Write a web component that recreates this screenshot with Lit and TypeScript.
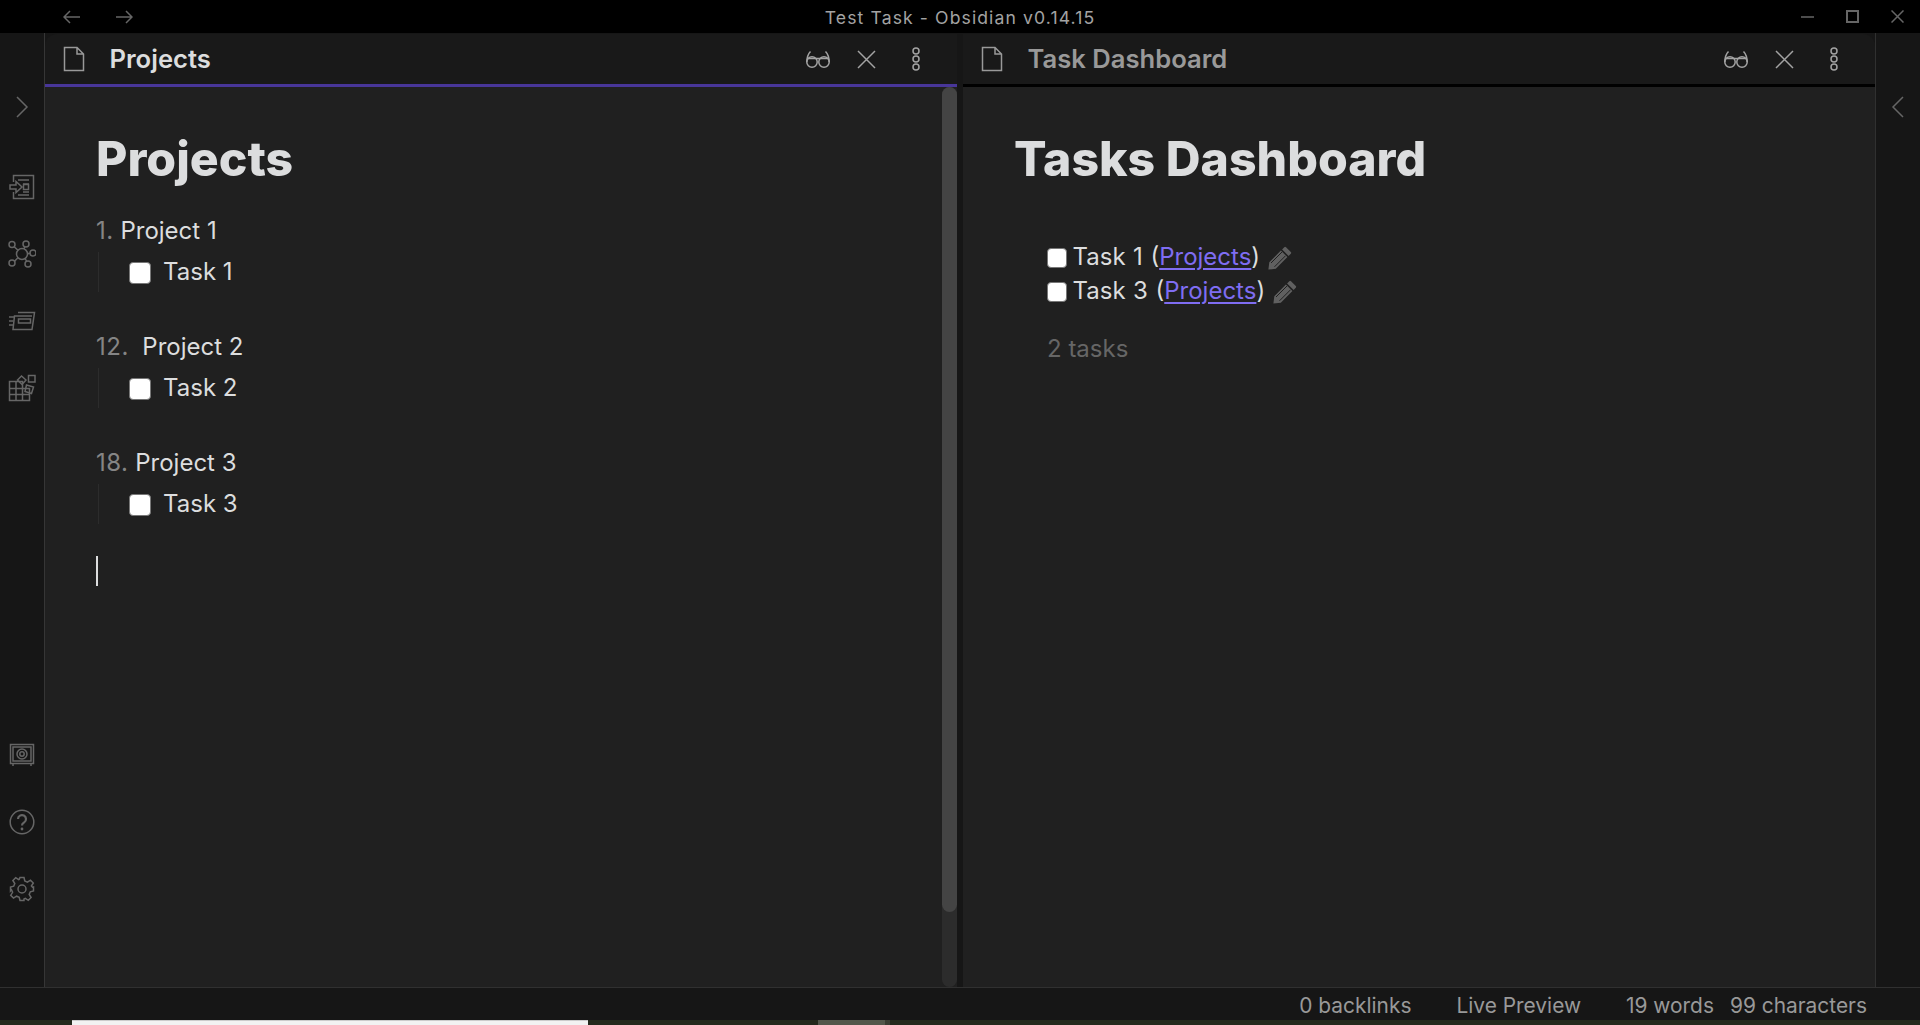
import { LitElement, html, css, svg } from "lit";
import { customElement } from "lit/decorators.js";

const ic = (w: number, h: number, body: unknown, cls = "") =>
  html`<svg class="ic ${cls}" width=${w} height=${h} viewBox="0 0 ${w} ${h}">${body}</svg>`;

const fileIcon = ic(22, 26, svg`<path d="M1.5 1.5H14L20.5 8V24.5H1.5Z M14 1.5V8H20.5"/>`);
const glasses = ic(26, 18, svg`<circle cx="7" cy="12" r="5.2"/><circle cx="19" cy="12" r="5.2"/><path d="M1.8 12 Q2 5 5.5 1.5 M24.2 12 Q24 5 20.5 1.5 M1.8 8.5H24.2"/>`);
const closeX = ic(19, 19, svg`<path d="M1 1L18 18M18 1L1 18"/>`);
const dots = ic(8, 24, svg`<circle cx="4" cy="4" r="3"/><circle cx="4" cy="12" r="3"/><circle cx="4" cy="20" r="3"/>`, "dots");
const pencil = html`<svg class="pencil" width="24" height="24" viewBox="0 0 24 24"><path d="M18 1.2L22.8 6a1.2 1.2 0 0 1 0 1.7L20.6 9.9 14.1 3.4 16.3 1.2a1.2 1.2 0 0 1 1.7 0ZM12.9 4.6L19.4 11.1 7.8 22.7 0.4 23.6 1.3 16.2Z"/><path class="cut" d="M3 17L14 6M6.5 20.8L17.5 9.8"/></svg>`;

const ribbonTop = [
  ic(26, 26, svg`<path d="M4.5 8V1.5H24.5V24.5H4.5V18M9 6H20M14 10H20M14 18H20M9 21H20"/><path d="M1 11H7V7.5L13 13L7 18.5V15H1Z"/><rect x="14.5" y="10.5" width="5" height="5"/>`),
  ic(28, 28, svg`<circle cx="14" cy="14" r="5.5"/><circle cx="4" cy="4.5" r="3"/><circle cx="18" cy="4" r="3"/><circle cx="25" cy="13" r="3"/><circle cx="20" cy="24" r="3"/><circle cx="4" cy="23" r="3"/><path d="M6.2 6.7L10 10.2M16.8 6.8L15.8 9M19.5 13.7L22 13.3M17 18.7L18.7 21.2M6.5 21.2L9.7 18"/>`),
  ic(28, 20, svg`<path d="M10 1.5H26.5L24 18.5H5L6.5 5H24"/><rect x="10.5" y="8" width="12" height="4"/><path d="M1 6H6M1 10H5.5M1 14H5"/>`),
  ic(28, 28, svg`<path d="M1.5 7.5H14.5V14.5H21.5V26.5H1.5ZM1.5 14.5H14.5V26.5M1.5 20.5H21.5M8 7.5V26.5"/><path d="M9.5 6L13.5 2L18 6L14 10.5Z"/><rect x="20.5" y="1.5" width="6.5" height="6.5"/><path d="M18.5 11L25.5 13L23.5 19.5L17 17.5Z"/>`),
];
const ribbonBottom = [
  ic(26, 24, svg`<rect x="1.5" y="1.5" width="23" height="19"/><rect x="4" y="4" width="18" height="14"/><circle cx="13" cy="11" r="5"/><circle cx="13" cy="11" r="2.2"/><path d="M4 21V23M22 21V23"/>`),
  html`<svg class="ic" width="26" height="26" viewBox="0 0 26 26"><circle cx="13" cy="13" r="11.8"/><path d="M9 10a4 4 0 1 1 6.2 3.4C13.8 14.3 13 15 13 16.5" stroke-width="2.2"/><circle class="fill" cx="13" cy="20" r="1.4"/></svg>`,
  ic(26, 26, svg`<circle cx="13" cy="13" r="4"/><path d="M11 1.5H15L15.8 5L18.4 6.1L21.5 4.2L24.3 7L22.4 10L23.5 11.2L24.5 11V15L21.3 15.8L20.2 18.4L22.1 21.5L19.3 24.3L16.3 22.4L15 23V24.5H11L10.2 21.3L7.6 20.2L4.5 22.1L1.7 19.3L3.6 16.3L2.5 13.8L1.5 15V11L4.7 10.2L5.8 7.6L3.9 4.5L6.7 1.7L9.7 3.6L10.2 3.4Z"/>`),
];

@customElement("app-root")
export class AppRoot extends LitElement {
  static styles = css`
    :host { display: flex; flex-direction: column; width: 1920px; height: 1025px; overflow: hidden;
      background: #161616; font-family: Inter, "Liberation Sans", sans-serif; color: #dcddde; }
    .ic { fill: none; stroke: currentColor; stroke-width: 1.5; display: block; flex: none; }
    .ic .fill { fill: currentColor; stroke: none; }
    .title { height: 33px; flex: none; background: #000; display: grid; grid-template-columns: 1fr auto 1fr; align-items: center; color: #999; }
    .nav { display: flex; gap: 34px; padding-left: 63px; color: #666; }
    .wintitle { text-align: center; font-size: 17.6px; letter-spacing: 1.1px; color: #a3a3a3; padding-top: 1px; }
    .winbtns { display: flex; gap: 32px; padding-right: 16px; color: #666; align-items: center; justify-content: flex-end; }
    .main { flex: 1; display: flex; min-height: 0; }
    .ribbon { width: 44px; flex: none; background: #161616; display: flex; flex-direction: column; align-items: center; color: #666; padding-top: 63px; box-sizing: content-box; }
    .ribbon.left { border-right: 1px solid #363636; }
    .ribbon.right { border-left: 1px solid #303030; }
    .ribtop { display: flex; flex-direction: column; align-items: center; height: 41px; justify-content: flex-start; }
    .ribicons { margin-top: 16.5px; height: 268px; display: flex; flex-direction: column; align-items: center; }
    .ribicons > div { height: 67px; display: flex; align-items: center; justify-content: center; }
    .ribbot { margin-top: auto; height: 201px; padding-bottom: 64.5px; display: flex; flex-direction: column; align-items: center; }
    .ribbot > div { height: 67px; display: flex; align-items: center; justify-content: center; }
    .pane { flex: 1; min-width: 0; display: flex; flex-direction: column; position: relative; }
    .pane.one { margin-right: 3px; }
    .pane.two { margin-left: 3px; }
    .head { height: 50px; flex: none; background: #191919; display: flex; align-items: center; padding: 0 37px 0 18px; margin-top: 1px; color: #999; }
    .one .head { border-top-left-radius: 12px; }
    .two .head { border-top-right-radius: 12px; }
    .head .name { flex: 1; font-size: 25.6px; font-weight: 600; padding-left: 24.5px; color: #999; margin-top: -2px; }
    .one .head .name { color: #dcddde; }
    .acts { display: flex; align-items: center; gap: 26px; color: #a3a3a3; }
    .acts .dots { margin-left: 10px; }
    .bar { height: 3px; flex: none; background: #000; }
    .one .bar { background: #483699; }
    .body { flex: 1; background: #202020; position: relative; padding: 40px 52px 0 51px; }
    h1 { margin: 0; font-size: 48.2px; line-height: 64px; font-weight: 800; color: #dcddde; }
    .ol { margin-top: 23px; font-size: 24px; line-height: 33.6px; }
    .li { white-space: pre; height: 34px; }
    .num { color: #858585; letter-spacing: 0.5px; }
    .sub { display: flex; align-items: center; height: 40px; margin: 4px 0 38px 2px; padding-left: 30px; border-left: 1px solid #2c2c2c; gap: 12px; }
    .cb { width: 22px; height: 22px; box-sizing: border-box; flex: none; background: #fff; border: 1.5px solid #777; border-radius: 4px; margin-top: 2px; }
    .caret { width: 2px; height: 30px; background: #dcddde; margin-top: -6px; }
    .thumb { position: absolute; right: 0; top: 0; width: 15px; height: 825px; border-radius: 7.5px; background: #444; }
    .track { position: absolute; right: 0; top: 0; width: 15px; height: 900px; border-radius: 7.5px; background: #2c2c2c; }
    .tasks { margin: 49px 0 0 33px; font-size: 24px; line-height: 34px; }
    .t { display: flex; align-items: center; height: 34px; white-space: pre; word-spacing: 0.8px; }
    .t .cb { width: 20px; height: 20px; margin-right: 6px; margin-left: -0.5px; }
    a { color: #7f6df2; text-decoration: underline; text-underline-offset: 3px; text-decoration-thickness: 2px; }
    .pencil { margin-left: 7.5px; margin-top: 1px; fill: #606060; }
    .pencil .cut { fill: none; stroke: #202020; stroke-width: 1; }
    .count { margin-top: 24px; color: #666; }
    .status { height: 33px; flex: none; box-sizing: border-box; padding-top: 3px; border-top: 1px solid #303030; background: #161616; display: flex; justify-content: flex-end; align-items: center; font-size: 20.9px; color: #999; padding-right: 53px; font-weight: 400; }
    .status span { display: block; }
    .status .g46 { margin-left: 45px; }
    .status .g45 { margin-left: 45px; }
    .status .g16 { margin-left: 16px; }
    .strip { height: 5px; flex: none; background: #23291c; display: flex; }
    .strip .a { margin-left: 72px; width: 516px; background: #f2f2f2; border-top: 1px solid #ccc; box-sizing: border-box; }
    .strip .b { margin-left: 230px; width: 67px; background: #53574b; }
    .strip .c { width: 5px; background: #3a3d33; }
  `;

  render() {
    const row = (num: string, name: string, task: string) => html`
      <div class="li"><span class="num">${num}</span>${name}</div>
      <div class="sub"><span class="cb"></span><span>${task}</span></div>`;
    return html`
      <div class="title">
        <div class="nav">
          ${ic(18, 14, svg`<path d="M17 7H1M7 1L1 7L7 13"/>`)}
          ${ic(18, 14, svg`<path d="M1 7H17M11 1L17 7L11 13"/>`)}
        </div>
        <div class="wintitle">Test Task - Obsidian v0.14.15</div>
        <div class="winbtns">
          ${ic(13, 2, svg`<path d="M0 1H13"/>`)}
          ${ic(13, 13, svg`<rect x="1" y="1" width="11" height="11" stroke-width="2"/>`)}
          ${ic(13, 13, svg`<path d="M0.5 0.5L12.5 12.5M12.5 0.5L0.5 12.5"/>`)}
        </div>
      </div>
      <div class="main">
        <div class="ribbon left">
          <div class="ribtop">${ic(14, 22, svg`<path d="M2 1L12 11L2 21"/>`)}</div>
          <div class="ribicons">${ribbonTop.map((i) => html`<div>${i}</div>`)}</div>
          <div class="ribbot">${ribbonBottom.map((i) => html`<div>${i}</div>`)}</div>
        </div>
        <div class="pane one">
          <div class="head">${fileIcon}<div class="name">Projects</div><div class="acts">${glasses}${closeX}${dots}</div></div>
          <div class="bar"></div>
          <div class="body">
            <div class="track"></div><div class="thumb"></div>
            <h1>Projects</h1>
            <div class="ol">
              ${row("1.", " Project 1", "Task 1")}
              ${row("12.", "  Project 2", "Task 2")}
              ${row("18.", " Project 3", "Task 3")}
              <div class="caret"></div>
            </div>
          </div>
        </div>
        <div class="pane two">
          <div class="head">${fileIcon}<div class="name">Task Dashboard</div><div class="acts">${glasses}${closeX}${dots}</div></div>
          <div class="bar"></div>
          <div class="body">
            <h1>Tasks Dashboard</h1>
            <div class="tasks">
              <div class="t"><span class="cb"></span>Task 1 (<a>Projects</a>)${pencil}</div>
              <div class="t"><span class="cb"></span>Task 3 (<a>Projects</a>)${pencil}</div>
              <div class="count">2 tasks</div>
            </div>
          </div>
        </div>
        <div class="ribbon right">
          <div class="ribtop">${ic(14, 22, svg`<path d="M12 1L2 11L12 21"/>`)}</div>
        </div>
      </div>
      <div class="status">
        <span>0 backlinks</span><span class="g46">Live Preview</span><span class="g45">19 words</span><span class="g16">99 characters</span>
      </div>
      <div class="strip"><div class="a"></div><div class="b"></div><div class="c"></div></div>
    `;
  }
}
